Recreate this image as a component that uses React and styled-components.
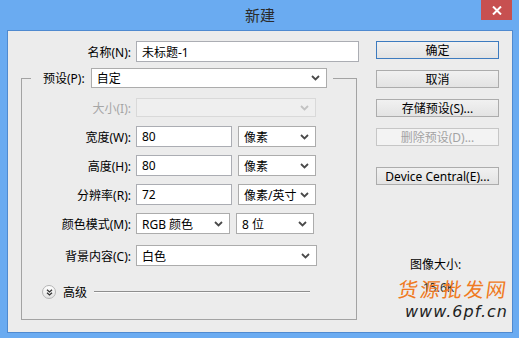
import React from 'react';
import styled, { createGlobalStyle } from 'styled-components';

const GlobalStyle = createGlobalStyle`
  html, body { margin: 0; padding: 0; background: #fff; }
  body {
    font-family: "Noto Sans", "Noto Sans CJK SC", sans-serif;
    font-size: 12px;
    color: #000;
  }
`;

const Window = styled.div`
  position: relative;
  width: 519px;
  height: 338px;
  box-sizing: border-box;
  background: #6aabf1;
  padding: 0 6px 5px 7px;
  display: flex;
  flex-direction: column;
`;

const TitleBar = styled.div`
  height: 30px;
  display: grid;
  grid-template-columns: 1fr auto 1fr;
`;

const Title = styled.div`
  grid-column: 2;
  align-self: center;
  font-family: "Noto Sans CJK SC", sans-serif;
  font-size: 15px;
  color: #2b2b2b;
  padding-bottom: 1px;
`;

const CloseButton = styled.div`
  grid-column: 3;
  justify-self: end;
  align-self: start;
  width: 31px;
  height: 20px;
  margin-right: 1px;
  background: #c75050;
  display: flex;
  align-items: center;
  justify-content: center;
`;

const Client = styled.div`
  flex: 1;
  display: flex;
  background: #ececec;
  border: 1px solid #4f8ad0;
  padding-top: 10px;
`;

const LeftPanel = styled.div`
  width: 351px;
  display: flex;
  flex-direction: column;
`;

const NameRow = styled.div`
  display: grid;
  grid-template-columns: 123px 223px;
  column-gap: 5px;
  align-items: center;
  height: 21px;
`;

const Label = styled.div`
  text-align: right;
  white-space: nowrap;
  color: ${({ disabled }) => (disabled ? '#a6a6a6' : '#000')};
`;

const TextInput = styled.input`
  box-sizing: border-box;
  width: ${({ w }) => w}px;
  height: 21px;
  margin: 0;
  padding: 0 5px;
  border: 1px solid #abadb3;
  background: #fff;
  font: inherit;
  color: #000;
  outline: none;
`;

const Group = styled.fieldset`
  margin: 6px 2px 0 13px;
  padding: 0 0 20px 0;
  min-width: 0;
  border: 1px solid #a3a3a3;
`;

const Legend = styled.legend`
  margin-left: 9px;
  padding: 0 6px 0 12px;
  display: flex;
  align-items: center;
  gap: 6px;
`;

const Select = styled.div`
  box-sizing: border-box;
  width: ${({ w }) => w}px;
  height: ${({ h }) => h || 21}px;
  display: flex;
  align-items: center;
  justify-content: space-between;
  padding: 0 6px 0 5px;
  border: 1px solid ${({ disabled }) => (disabled ? '#d9d9d9' : '#acacac')};
  background: ${({ disabled }) => (disabled ? '#efefef' : '#fff')};
  white-space: nowrap;
`;

const Rows = styled.div`
  display: flex;
  flex-direction: column;
  gap: 8px;
  padding-top: 9px;
`;

const Row = styled.div`
  display: grid;
  grid-template-columns: 109px auto;
  column-gap: 5px;
  align-items: center;
  height: 21px;
  margin-top: ${({ extra }) => extra || 0}px;
`;

const Controls = styled.div`
  display: flex;
  align-items: center;
  gap: ${({ gap }) => gap || 6}px;
`;

const AdvancedRow = styled.div`
  display: flex;
  align-items: center;
  gap: 7px;
  height: 14px;
  margin-top: 19px;
  padding-left: 20px;
`;

const AdvancedIcon = styled.div`
  box-sizing: border-box;
  width: 14px;
  height: 14px;
  border-radius: 50%;
  border: 1px solid #b4b4b4;
  background: linear-gradient(#ffffff, #e2e2e2);
  display: flex;
  align-items: center;
  justify-content: center;
`;

const Rule = styled.div`
  width: 216px;
  height: 0;
  border-top: 1px solid #8e8e8e;
  border-bottom: 1px solid #fafafa;
`;

const RightPanel = styled.div`
  width: 123px;
  margin-left: 17px;
  display: flex;
  flex-direction: column;
  gap: 11px;
`;

const Button = styled.div`
  box-sizing: border-box;
  height: 18px;
  display: flex;
  align-items: center;
  justify-content: center;
  border: 1px solid ${({ primary, disabled }) =>
    primary ? '#3d7bbf' : disabled ? '#c6c6c6' : '#acacac'};
  background: ${({ disabled }) =>
    disabled ? '#f3f3f3' : 'linear-gradient(#f1f1f1, #e3e3e3)'};
  color: ${({ disabled }) => (disabled ? '#a3a3a3' : '#000')};
  margin-top: ${({ spaced }) => (spaced ? 10 : 0)}px;
  white-space: nowrap;
`;

const ImageSize = styled.div`
  margin-top: 61px;
  padding-left: 34px;
  line-height: 16px;
`;

const SizeValue = styled.div`
  margin-top: 7px;
  padding-left: 13px;
  color: #333;
`;

const Watermark = styled.div`
  position: absolute;
  right: 11px;
  top: 276px;
  display: flex;
  flex-direction: column;
  align-items: flex-end;
  pointer-events: none;
`;

const MarkCn = styled.div`
  font-family: "Noto Sans CJK SC", sans-serif;
  font-size: 20px;
  line-height: 26px;
  letter-spacing: 2px;
  color: #f07a22;
  transform: skewX(-8deg);
`;

const MarkUrl = styled.div`
  font-family: "DejaVu Sans", sans-serif;
  font-style: italic;
  font-size: 16px;
  line-height: 20px;
  letter-spacing: 1px;
  color: #222;
`;

const Chevron = ({ disabled }) => (
  <svg width="9" height="6" viewBox="0 0 9 6">
    <path
      d="M1 1 L4.5 4.5 L8 1"
      fill="none"
      stroke={disabled ? '#c2c2c2' : '#4a4a4a'}
      strokeWidth="1.8"
    />
  </svg>
);

const Dropdown = ({ w, h, value, disabled }) => (
  <Select w={w} h={h} disabled={disabled}>
    <span>{value}</span>
    <Chevron disabled={disabled} />
  </Select>
);

const Field = ({ label, disabled, extra, children }) => (
  <Row extra={extra}>
    <Label disabled={disabled}>{label}</Label>
    <Controls>{children}</Controls>
  </Row>
);

export default function App() {
  return (
    <>
      <GlobalStyle />
      <Window>
        <TitleBar>
          <Title>新建</Title>
          <CloseButton>
            <svg width="10" height="9" viewBox="0 0 10 9">
              <path d="M1 0.5 L9 8.5 M9 0.5 L1 8.5" stroke="#fff" strokeWidth="2" />
            </svg>
          </CloseButton>
        </TitleBar>
        <Client>
          <LeftPanel>
            <NameRow>
              <Label>名称(N):</Label>
              <TextInput w={223} defaultValue="未标题-1" readOnly />
            </NameRow>
            <Group>
              <Legend>
                <Label>预设(P):</Label>
                <Dropdown w={236} h={20} value="自定" />
              </Legend>
              <Rows>
                <Field label="大小(I):" disabled>
                  <Dropdown w={180} h={19} value="" disabled />
                </Field>
                <Field label="宽度(W):">
                  <TextInput w={96} defaultValue="80" readOnly />
                  <Dropdown w={78} value="像素" />
                </Field>
                <Field label="高度(H):">
                  <TextInput w={96} defaultValue="80" readOnly />
                  <Dropdown w={78} value="像素" />
                </Field>
                <Field label="分辨率(R):">
                  <TextInput w={96} defaultValue="72" readOnly />
                  <Dropdown w={78} value="像素/英寸" />
                </Field>
                <Field label="颜色模式(M):">
                  <Dropdown w={94} value="RGB 颜色" />
                  <Dropdown w={78} value="8 位" />
                </Field>
                <Field label="背景内容(C):" extra={3}>
                  <Dropdown w={181} value="白色" />
                </Field>
              </Rows>
              <AdvancedRow>
                <AdvancedIcon>
                  <svg width="7" height="7" viewBox="0 0 7 7">
                    <path
                      d="M1 0.8 L3.5 3 L6 0.8 M1 3.8 L3.5 6 L6 3.8"
                      fill="none"
                      stroke="#333"
                      strokeWidth="1.3"
                    />
                  </svg>
                </AdvancedIcon>
                <span>高级</span>
                <Rule />
              </AdvancedRow>
            </Group>
          </LeftPanel>
          <RightPanel>
            <Button primary>确定</Button>
            <Button>取消</Button>
            <Button>存储预设(S)...</Button>
            <Button disabled>删除预设(D)...</Button>
            <Button spaced>Device Central(E)...</Button>
            <ImageSize>
              <div>图像大小:</div>
              <SizeValue>15.6K</SizeValue>
            </ImageSize>
          </RightPanel>
        </Client>
        <Watermark>
          <MarkCn>货源批发网</MarkCn>
          <MarkUrl>www.6pf.cn</MarkUrl>
        </Watermark>
      </Window>
    </>
  );
}
